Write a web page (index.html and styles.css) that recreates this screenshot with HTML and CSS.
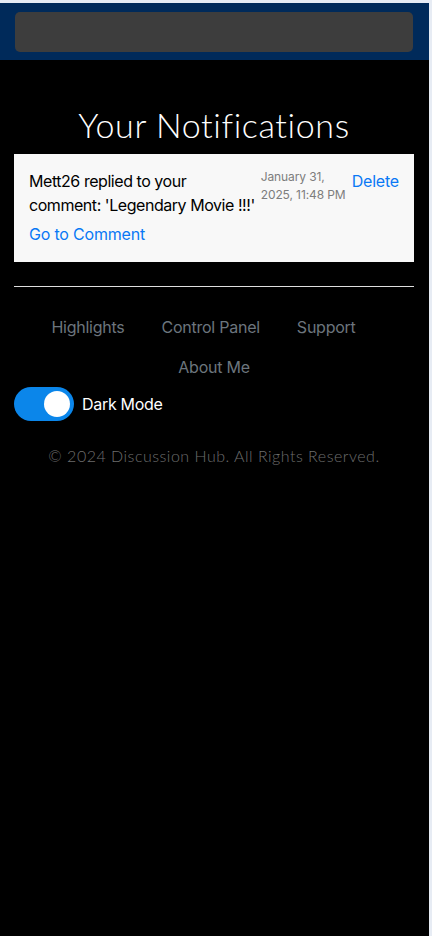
FILE: index.html
```html
<!DOCTYPE html>
<html lang="en">
<head>
<meta charset="utf-8">
<meta name="viewport" content="width=device-width, initial-scale=1">
<title>Your Notifications</title>
<link rel="stylesheet" href="styles.css">
</head>
<body>
<div class="page">
  <header class="topbar">
    <div class="topbar-inner"></div>
  </header>
  <main class="content">
    <h1 class="title">Your Notifications</h1>
    <div class="card">
      <div class="card-main">
        <p class="message">Mett26 replied to your<br>comment: 'Legendary Movie !!!'</p>
        <a class="link" href="#">Go to Comment</a>
      </div>
      <div class="date">January 31, 2025, 11:48 PM</div>
      <a class="link delete" href="#">Delete</a>
    </div>
  </main>
  <footer class="footer">
    <hr class="rule">
    <ul class="nav">
      <li class="nav-item"><a href="#">Highlights</a></li>
      <li class="nav-item"><a href="#">Control Panel</a></li>
      <li class="nav-item"><a href="#">Support</a></li>
      <li class="nav-item"><a href="#">About Me</a></li>
    </ul>
    <label class="toggle-row">
      <span class="switch"><span class="knob"></span></span>
      <span class="toggle-label">Dark Mode</span>
    </label>
    <p class="copyright">© 2024 Discussion Hub. All Rights Reserved.</p>
  </footer>
</div>
</body>
</html>
```
FILE: styles.css
```css
html, body {
  margin: 0;
  padding: 0;
}
body {
  background: #e7ecf4;
  font-family: Inter, "Liberation Sans", sans-serif;
  padding-top: 3px;
}
.page {
  width: 429px;
  min-height: 933px;
  background: #000;
}
.topbar {
  background: #002a5a;
  padding: 9px 16px 8px 15px;
}
.topbar-inner {
  height: 40px;
  background: #3d3d3d;
  border-radius: 5px;
}
.content {
  padding: 0 15px 0 14px;
}
.title {
  margin: 42px 0 6px;
  text-align: center;
  font-family: Lato, "Open Sans", sans-serif;
  font-weight: 300;
  font-size: 34px;
  letter-spacing: 0.6px;
  line-height: 46px;
  color: #fff;
}
.card {
  background: #f8f8f8;
  padding: 15px 15px 16px;
  display: flex;
  align-items: flex-start;
}
.card-main {
  flex: 1;
  min-width: 0;
}
.message {
  margin: 0 0 5px;
  font-size: 16px;
  line-height: 24px;
  letter-spacing: -0.45px;
  white-space: nowrap;
  color: #000;
}
.link {
  color: #0a78f5;
  text-decoration: none;
  font-size: 16px;
  line-height: 24px;
  letter-spacing: -0.2px;
}
.date {
  margin: -1px 4px 0 3px;
  width: 87px;
  flex: none;
  font-size: 12px;
  line-height: 18px;
  letter-spacing: -0.1px;
  color: #7d7d7d;
}
.delete {
  flex: none;
}
.footer {
  padding: 0 15px 0 14px;
}
.rule {
  margin: 24px 0 20px;
  border: 0;
  border-top: 1px solid #dedede;
}
.nav {
  list-style: none;
  margin: 0;
  padding: 0;
  display: flex;
  flex-wrap: wrap;
  justify-content: center;
}
.nav-item {
  padding: 8px 8px;
  margin-right: 21px;
  line-height: 24px;
  font-size: 16px;
  letter-spacing: -0.25px;
}
.nav-item:last-child {
  margin-right: 0;
}
.nav-item a {
  color: #6c757d;
  text-decoration: none;
}
.toggle-row {
  display: flex;
  align-items: center;
  gap: 8px;
}
.switch {
  position: relative;
  width: 60px;
  height: 34px;
  border-radius: 17px;
  background: #0b86ea;
  flex: none;
}
.knob {
  position: absolute;
  top: 4px;
  left: 30px;
  width: 26px;
  height: 26px;
  border-radius: 50%;
  background: #fff;
}
.toggle-label {
  color: #fff;
  font-size: 16px;
  line-height: 24px;
  letter-spacing: -0.3px;
}
.copyright {
  margin: 23px 0 0;
  text-align: center;
  font-family: Lato, "Open Sans", sans-serif;
  font-weight: 300;
  font-size: 16px;
  letter-spacing: 0.5px;
  line-height: 24px;
  color: #6d6d6d;
}
```
